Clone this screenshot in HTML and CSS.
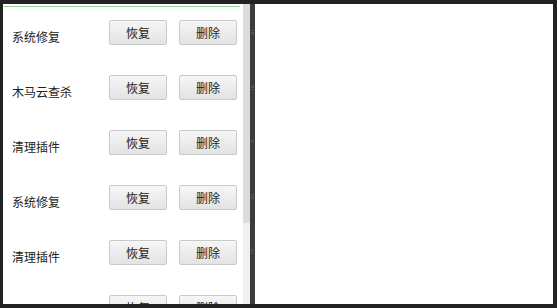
FILE: index.html
```html
<!DOCTYPE html>
<html lang="zh-CN">
<head>
    <meta charset="UTF-8">
    <title>插件管理</title>
    <link rel="stylesheet" href="styles.css">
</head>
<body>
    <div class="frame">
        <div class="left-panel">
            <div class="top-line"></div>
            <div class="list">
                <div class="row">
                    <span class="name">系统修复</span>
                    <button>恢复</button>
                    <button>删除</button>
                </div>
                <div class="row">
                    <span class="name">木马云查杀</span>
                    <button>恢复</button>
                    <button>删除</button>
                </div>
                <div class="row">
                    <span class="name">清理插件</span>
                    <button>恢复</button>
                    <button>删除</button>
                </div>
                <div class="row">
                    <span class="name">系统修复</span>
                    <button>恢复</button>
                    <button>删除</button>
                </div>
                <div class="row">
                    <span class="name">清理插件</span>
                    <button>恢复</button>
                    <button>删除</button>
                </div>
                <div class="row">
                    <span class="name">木马云查杀</span>
                    <button>恢复</button>
                    <button>删除</button>
                </div>
            </div>
        </div>
        <div class="scrollbar">
            <div class="thumb"></div>
        </div>
        <div class="splitter">
            <i></i><i></i><i></i><i></i><i></i>
        </div>
        <div class="right-panel"></div>
    </div>
</body>
</html>
```

FILE: styles.css
```css
body {
    margin: 0;
    background-color: #222;
    font-family: "Noto Sans CJK SC", "Liberation Sans", sans-serif;
    overflow: hidden;
}

.frame {
    display: flex;
    height: 300px;
    padding: 4px 4px 4px 3px;
}

.left-panel {
    flex-shrink: 0;
    width: 240px;
    background-color: #fff;
    overflow: hidden;
}

.top-line {
    height: 1px;
    margin: 2px 3px 0 1px;
    background-color: #8fce8f;
}

.list {
    padding: 13px 0 0 9px;
}

.row {
    display: flex;
    align-items: center;
    height: 25px;
    margin-bottom: 30px;
}

.name {
    flex-shrink: 0;
    width: 97px;
    padding-top: 8px;
    font-size: 12px;
    color: #222;
}

button {
    flex-shrink: 0;
    width: 58px;
    height: 25px;
    padding: 0;
    font-family: inherit;
    font-size: 12px;
    color: #222;
    background: linear-gradient(#f6f6f6, #e3e3e3);
    border: 1px solid #c9c9c9;
    border-radius: 2px;
}

button + button {
    margin-left: 12px;
}

.scrollbar {
    flex-shrink: 0;
    width: 7px;
    background-color: #f1f1f1;
}

.thumb {
    height: 219px;
    background-color: #dcdcdc;
}

.splitter {
    flex-shrink: 0;
    width: 5px;
    background-color: #3b3b3b;
    display: flex;
    flex-direction: column;
    align-items: center;
    padding-top: 26px;
}

.splitter i {
    display: block;
    width: 3px;
    height: 5px;
    margin-bottom: 50px;
    background: repeating-linear-gradient(#555 0 1px, transparent 1px 2px);
}

.right-panel {
    flex: 1;
    background-color: #fff;
}
```
